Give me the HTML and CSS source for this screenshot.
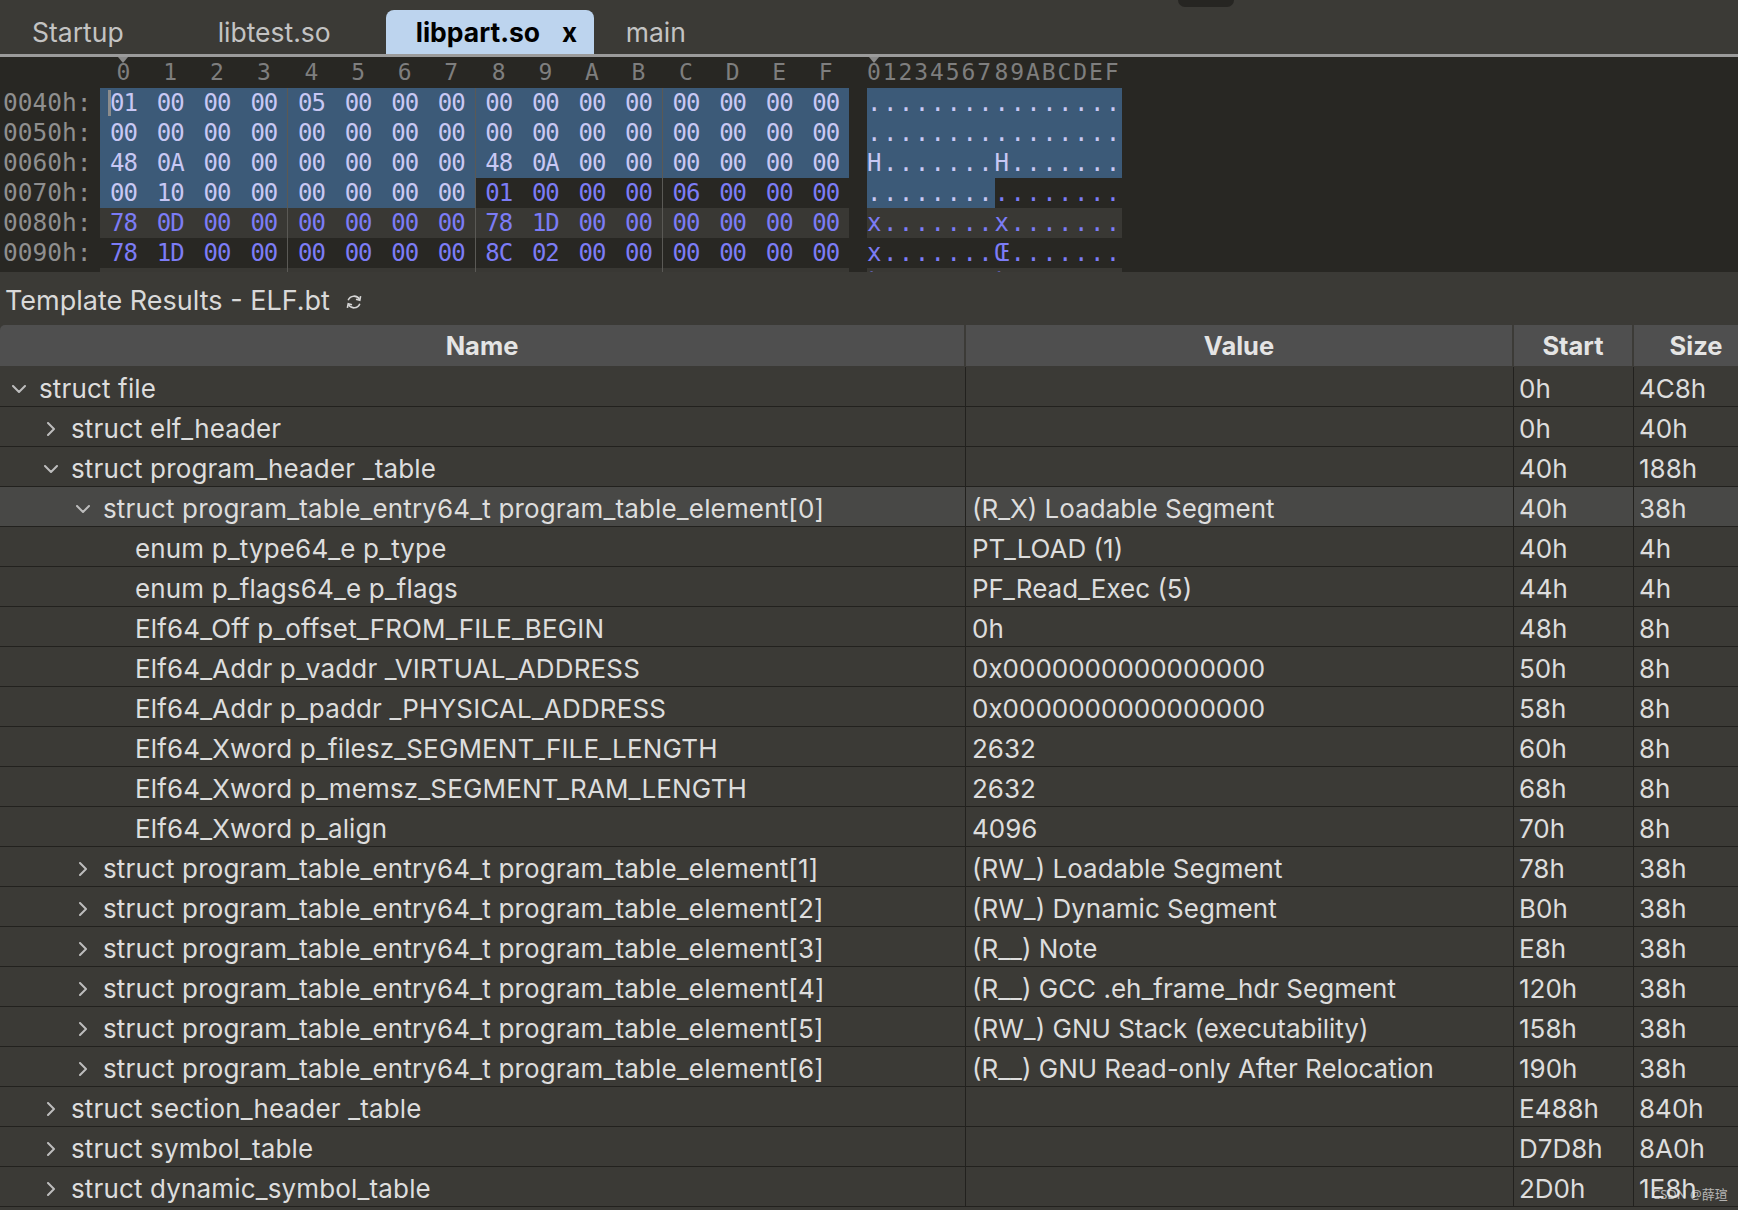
FILE: index.html
```html
<!DOCTYPE html>
<html>
<head>
<meta charset="utf-8">
<link rel="stylesheet" href="styles.css">
</head>
<body>
<div class="app">
  <div class="tabbar">
    <div class="tab tab-startup">Startup</div>
    <div class="tab tab-libtest">libtest.so</div>
    <div class="tab tab-active"><span>libpart.so</span><span class="close">x</span></div>
    <div class="tab tab-main">main</div>
    <div class="notch"></div>
  </div>

  <div class="hexpanel">
    <div class="marker marker-hex"></div>
    <div class="marker marker-ascii"></div>
    <div class="hexrow hexhead">
      <div class="off"></div>
      <div class="bytes">
        <div class="grp"><span>0</span><span>1</span><span>2</span><span>3</span></div>
        <div class="grp"><span>4</span><span>5</span><span>6</span><span>7</span></div>
        <div class="grp"><span>8</span><span>9</span><span>A</span><span>B</span></div>
        <div class="grp"><span>C</span><span>D</span><span>E</span><span>F</span></div>
      </div>
      <div class="gap"></div>
      <div class="ascii"><span class="half">01234567</span><span class="half">89ABCDEF</span></div>
    </div>

    <div class="hexrow">
      <div class="off">0040h:</div>
      <div class="bytes">
        <div class="grp sel"><span class="cursor">01</span><span>00</span><span>00</span><span>00</span></div>
        <div class="grp sel"><span>05</span><span>00</span><span>00</span><span>00</span></div>
        <div class="grp sel"><span>00</span><span>00</span><span>00</span><span>00</span></div>
        <div class="grp sel"><span>00</span><span>00</span><span>00</span><span>00</span></div>
      </div>
      <div class="gap"></div>
      <div class="ascii"><span class="half sel">........</span><span class="half sel">........</span></div>
    </div>

    <div class="hexrow">
      <div class="off">0050h:</div>
      <div class="bytes">
        <div class="grp sel"><span>00</span><span>00</span><span>00</span><span>00</span></div>
        <div class="grp sel"><span>00</span><span>00</span><span>00</span><span>00</span></div>
        <div class="grp sel"><span>00</span><span>00</span><span>00</span><span>00</span></div>
        <div class="grp sel"><span>00</span><span>00</span><span>00</span><span>00</span></div>
      </div>
      <div class="gap"></div>
      <div class="ascii"><span class="half sel">........</span><span class="half sel">........</span></div>
    </div>

    <div class="hexrow alt">
      <div class="off">0060h:</div>
      <div class="bytes">
        <div class="grp sel"><span>48</span><span>0A</span><span>00</span><span>00</span></div>
        <div class="grp sel"><span>00</span><span>00</span><span>00</span><span>00</span></div>
        <div class="grp sel"><span>48</span><span>0A</span><span>00</span><span>00</span></div>
        <div class="grp sel"><span>00</span><span>00</span><span>00</span><span>00</span></div>
      </div>
      <div class="gap"></div>
      <div class="ascii"><span class="half sel">H.......</span><span class="half sel">H.......</span></div>
    </div>

    <div class="hexrow">
      <div class="off">0070h:</div>
      <div class="bytes">
        <div class="grp sel"><span>00</span><span>10</span><span>00</span><span>00</span></div>
        <div class="grp sel"><span>00</span><span>00</span><span>00</span><span>00</span></div>
        <div class="grp"><span>01</span><span>00</span><span>00</span><span>00</span></div>
        <div class="grp"><span>06</span><span>00</span><span>00</span><span>00</span></div>
      </div>
      <div class="gap"></div>
      <div class="ascii"><span class="half sel">........</span><span class="half">........</span></div>
    </div>

    <div class="hexrow alt">
      <div class="off">0080h:</div>
      <div class="bytes">
        <div class="grp"><span>78</span><span>0D</span><span>00</span><span>00</span></div>
        <div class="grp"><span>00</span><span>00</span><span>00</span><span>00</span></div>
        <div class="grp"><span>78</span><span>1D</span><span>00</span><span>00</span></div>
        <div class="grp"><span>00</span><span>00</span><span>00</span><span>00</span></div>
      </div>
      <div class="gap"></div>
      <div class="ascii"><span class="half">x.......</span><span class="half">x.......</span></div>
    </div>

    <div class="hexrow">
      <div class="off">0090h:</div>
      <div class="bytes">
        <div class="grp"><span>78</span><span>1D</span><span>00</span><span>00</span></div>
        <div class="grp"><span>00</span><span>00</span><span>00</span><span>00</span></div>
        <div class="grp"><span>8C</span><span>02</span><span>00</span><span>00</span></div>
        <div class="grp"><span>00</span><span>00</span><span>00</span><span>00</span></div>
      </div>
      <div class="gap"></div>
      <div class="ascii"><span class="half">x.......</span><span class="half">Œ.......</span></div>
    </div>

    <div class="hexrow alt">
      <div class="off">00A0h:</div>
      <div class="bytes">
        <div class="grp"><span>60</span><span>0E</span><span>00</span><span>00</span></div>
        <div class="grp"><span>00</span><span>00</span><span>00</span><span>00</span></div>
        <div class="grp"><span>60</span><span>1E</span><span>00</span><span>00</span></div>
        <div class="grp"><span>00</span><span>00</span><span>00</span><span>00</span></div>
      </div>
      <div class="gap"></div>
      <div class="ascii"><span class="half">`.......</span><span class="half">`.......</span></div>
    </div>
  </div>

  <div class="results-title">
    <span>Template Results - ELF.bt</span>
    <svg class="refresh" width="18" height="16" viewBox="0 0 18 16">
      <path d="M14.5 5.5 A6.2 6.2 0 0 0 3.2 6.2" fill="none" stroke="#d6d6d6" stroke-width="1.6"/>
      <path d="M15.6 2.2 L14.8 6.2 L11 5.2" fill="none" stroke="#d6d6d6" stroke-width="1.6"/>
      <path d="M3.5 10.5 A6.2 6.2 0 0 0 14.8 9.8" fill="none" stroke="#d6d6d6" stroke-width="1.6"/>
      <path d="M2.4 13.8 L3.2 9.8 L7 10.8" fill="none" stroke="#d6d6d6" stroke-width="1.6"/>
    </svg>
  </div>

  <div class="table">
    <div class="thead">
      <div class="th c-name">Name</div>
      <div class="th c-value">Value</div>
      <div class="th c-start">Start</div>
      <div class="th c-size">Size</div>
    </div>

    <div class="tr">
      <div class="td c-name l0"><span class="tog"><svg width="14" height="8" viewBox="0 0 14 8"><polyline points="1,1 7,7 13,1"/></svg></span>struct file</div>
      <div class="td c-value"></div><div class="td c-start">0h</div><div class="td c-size">4C8h</div>
    </div>
    <div class="tr">
      <div class="td c-name l1"><span class="tog"><svg width="8" height="14" viewBox="0 0 8 14"><polyline points="1,1 7,7 1,13"/></svg></span>struct elf_header</div>
      <div class="td c-value"></div><div class="td c-start">0h</div><div class="td c-size">40h</div>
    </div>
    <div class="tr">
      <div class="td c-name l1"><span class="tog"><svg width="14" height="8" viewBox="0 0 14 8"><polyline points="1,1 7,7 13,1"/></svg></span>struct program_header _table</div>
      <div class="td c-value"></div><div class="td c-start">40h</div><div class="td c-size">188h</div>
    </div>
    <div class="tr hl">
      <div class="td c-name l2"><span class="tog"><svg width="14" height="8" viewBox="0 0 14 8"><polyline points="1,1 7,7 13,1"/></svg></span>struct program_table_entry64_t program_table_element[0]</div>
      <div class="td c-value">(R_X) Loadable Segment</div><div class="td c-start">40h</div><div class="td c-size">38h</div>
    </div>
    <div class="tr">
      <div class="td c-name l3"><span class="tog"></span>enum p_type64_e p_type</div>
      <div class="td c-value">PT_LOAD (1)</div><div class="td c-start">40h</div><div class="td c-size">4h</div>
    </div>
    <div class="tr">
      <div class="td c-name l3"><span class="tog"></span>enum p_flags64_e p_flags</div>
      <div class="td c-value">PF_Read_Exec (5)</div><div class="td c-start">44h</div><div class="td c-size">4h</div>
    </div>
    <div class="tr">
      <div class="td c-name l3"><span class="tog"></span>Elf64_Off p_offset_FROM_FILE_BEGIN</div>
      <div class="td c-value">0h</div><div class="td c-start">48h</div><div class="td c-size">8h</div>
    </div>
    <div class="tr">
      <div class="td c-name l3"><span class="tog"></span>Elf64_Addr p_vaddr _VIRTUAL_ADDRESS</div>
      <div class="td c-value">0x0000000000000000</div><div class="td c-start">50h</div><div class="td c-size">8h</div>
    </div>
    <div class="tr">
      <div class="td c-name l3"><span class="tog"></span>Elf64_Addr p_paddr _PHYSICAL_ADDRESS</div>
      <div class="td c-value">0x0000000000000000</div><div class="td c-start">58h</div><div class="td c-size">8h</div>
    </div>
    <div class="tr">
      <div class="td c-name l3"><span class="tog"></span>Elf64_Xword p_filesz_SEGMENT_FILE_LENGTH</div>
      <div class="td c-value">2632</div><div class="td c-start">60h</div><div class="td c-size">8h</div>
    </div>
    <div class="tr">
      <div class="td c-name l3"><span class="tog"></span>Elf64_Xword p_memsz_SEGMENT_RAM_LENGTH</div>
      <div class="td c-value">2632</div><div class="td c-start">68h</div><div class="td c-size">8h</div>
    </div>
    <div class="tr">
      <div class="td c-name l3"><span class="tog"></span>Elf64_Xword p_align</div>
      <div class="td c-value">4096</div><div class="td c-start">70h</div><div class="td c-size">8h</div>
    </div>
    <div class="tr">
      <div class="td c-name l2"><span class="tog"><svg width="8" height="14" viewBox="0 0 8 14"><polyline points="1,1 7,7 1,13"/></svg></span>struct program_table_entry64_t program_table_element[1]</div>
      <div class="td c-value">(RW_) Loadable Segment</div><div class="td c-start">78h</div><div class="td c-size">38h</div>
    </div>
    <div class="tr">
      <div class="td c-name l2"><span class="tog"><svg width="8" height="14" viewBox="0 0 8 14"><polyline points="1,1 7,7 1,13"/></svg></span>struct program_table_entry64_t program_table_element[2]</div>
      <div class="td c-value">(RW_) Dynamic Segment</div><div class="td c-start">B0h</div><div class="td c-size">38h</div>
    </div>
    <div class="tr">
      <div class="td c-name l2"><span class="tog"><svg width="8" height="14" viewBox="0 0 8 14"><polyline points="1,1 7,7 1,13"/></svg></span>struct program_table_entry64_t program_table_element[3]</div>
      <div class="td c-value">(R__) Note</div><div class="td c-start">E8h</div><div class="td c-size">38h</div>
    </div>
    <div class="tr">
      <div class="td c-name l2"><span class="tog"><svg width="8" height="14" viewBox="0 0 8 14"><polyline points="1,1 7,7 1,13"/></svg></span>struct program_table_entry64_t program_table_element[4]</div>
      <div class="td c-value">(R__) GCC .eh_frame_hdr Segment</div><div class="td c-start">120h</div><div class="td c-size">38h</div>
    </div>
    <div class="tr">
      <div class="td c-name l2"><span class="tog"><svg width="8" height="14" viewBox="0 0 8 14"><polyline points="1,1 7,7 1,13"/></svg></span>struct program_table_entry64_t program_table_element[5]</div>
      <div class="td c-value">(RW_) GNU Stack (executability)</div><div class="td c-start">158h</div><div class="td c-size">38h</div>
    </div>
    <div class="tr">
      <div class="td c-name l2"><span class="tog"><svg width="8" height="14" viewBox="0 0 8 14"><polyline points="1,1 7,7 1,13"/></svg></span>struct program_table_entry64_t program_table_element[6]</div>
      <div class="td c-value">(R__) GNU Read-only After Relocation</div><div class="td c-start">190h</div><div class="td c-size">38h</div>
    </div>
    <div class="tr">
      <div class="td c-name l1"><span class="tog"><svg width="8" height="14" viewBox="0 0 8 14"><polyline points="1,1 7,7 1,13"/></svg></span>struct section_header _table</div>
      <div class="td c-value"></div><div class="td c-start">E488h</div><div class="td c-size">840h</div>
    </div>
    <div class="tr">
      <div class="td c-name l1"><span class="tog"><svg width="8" height="14" viewBox="0 0 8 14"><polyline points="1,1 7,7 1,13"/></svg></span>struct symbol_table</div>
      <div class="td c-value"></div><div class="td c-start">D7D8h</div><div class="td c-size">8A0h</div>
    </div>
    <div class="tr">
      <div class="td c-name l1"><span class="tog"><svg width="8" height="14" viewBox="0 0 8 14"><polyline points="1,1 7,7 1,13"/></svg></span>struct dynamic_symbol_table</div>
      <div class="td c-value"></div><div class="td c-start">2D0h</div><div class="td c-size">1E8h</div>
    </div>
  </div>

  <div class="watermark">CSDN @薛瑄</div>
</div>
</body>
</html>
```
FILE: styles.css
```css
* { box-sizing: border-box; }
html, body { margin: 0; padding: 0; }
body {
  width: 1738px;
  height: 1210px;
  overflow: hidden;
  background: #3b3a36;
  font-family: Inter, "Noto Sans", "Noto Sans CJK SC", sans-serif;
  color: #dcdcdc;
}
.app { position: relative; width: 1738px; height: 1210px; overflow: hidden; }

/* Tabs */
.tabbar {
  position: relative;
  height: 57px;
  display: flex;
  align-items: flex-end;
  padding-left: 32px;
  border-bottom: 3px solid #9b9b9b;
  background: #3b3a36;
}
.tab {
  height: 44px;
  display: flex;
  align-items: center;
  font-size: 26.5px;
  color: #c3c3c3;
  white-space: nowrap;
}
.tab-startup { margin-right: 94px; }
.tab-libtest { margin-right: 55px; }
.tab-active {
  width: 208px;
  background: #bdd4ee;
  border-radius: 8px 8px 0 0;
  padding: 0 0 0 30px;
  color: #000;
  font-weight: 700;
  margin-right: 32px;
}
.tab-active .close { margin-left: 22px; font-size: 26px; }
.notch {
  position: absolute;
  left: 1178px; top: 0;
  width: 56px; height: 7px;
  background: #262522;
  border-radius: 0 0 8px 8px;
}

/* Hex panel */
.hexpanel {
  position: relative;
  height: 215px;
  background: #282723;
  overflow: hidden;
  font-family: "DejaVu Sans Mono", monospace;
}
.marker {
  position: absolute;
  top: 0;
  width: 0; height: 0;
  border-left: 5px solid transparent;
  border-right: 5px solid transparent;
  border-top: 6px solid #8a8a8a;
}
.marker-hex { left: 118px; }
.marker-ascii { left: 869px; }
.hexrow {
  display: flex;
  height: 30px;
  line-height: 30px;
}
.hexrow .off {
  width: 100px;
  padding-left: 3px;
  font-size: 24.5px;
  color: #8f8f8f;
}
.bytes { display: flex; width: 749px; }
.grp { display: flex; width: 187.25px; }
.grp + .grp { border-left: 1px solid #5a5955; }
.grp span {
  flex: 1;
  text-align: center;
  font-size: 24px;
  letter-spacing: -1px;
  color: #7c7cf6;
}
.gap { width: 18px; }
.ascii { display: flex; width: 255px; }
.ascii .half {
  width: 127.5px;
  font-size: 24px;
  letter-spacing: 1.45px;
  color: #7c7cf6;
  white-space: pre;
}
.hexrow.alt .bytes, .hexrow.alt .ascii { background: #393834; }
.grp.sel, .half.sel { background: #3c5a78; }
.grp.sel span, .half.sel { color: #c8c8f4; }
.cursor { position: relative; }
.cursor::before {
  content: "";
  position: absolute;
  left: 8px; top: 2px;
  width: 3px; height: 26px;
  background: #8c8c8c;
}
.hexhead { height: 31px; line-height: 31px; }
.hexhead .bytes, .hexhead .ascii { background: transparent; }
.hexhead .grp + .grp { border-left-color: transparent; }
.hexhead .grp span, .hexhead .half { color: #7e7e7e; font-size: 23px; letter-spacing: 0; }
.hexhead .half { letter-spacing: 1.9px; }

/* Results title */
.results-title {
  height: 53px;
  display: flex;
  align-items: center;
  padding-left: 5px;
  padding-top: 4px;
  font-size: 27px;
  color: #d9d9d9;
}
.refresh { margin-left: 15px; margin-top: 3px; }

/* Table */
.table { width: 1760px; }
.thead {
  display: flex;
  height: 41px;
  background: #4f4f4f;
  border-radius: 5px 0 0 0;
  margin-bottom: 1px;
}
.th {
  font-weight: 700;
  font-size: 25.5px;
  color: #e4e4e4;
  text-align: center;
  line-height: 41px;
  border-right: 2px solid #3c3b37;
}
.c-name { width: 966px; }
.c-value { width: 548px; }
.c-start { width: 120px; }
.c-size { width: 126px; }
.tr {
  display: flex;
  height: 40px;
  border-bottom: 1px solid #22211e;
}
.tr.hl { background: #484846; }
.td {
  font-size: 26px;
  line-height: 36px;
  padding-top: 4px;
  color: #dddddd;
  white-space: nowrap;
  overflow: hidden;
  border-right: 1px solid #22211e;
  padding-left: 6px;
}
.td.c-name { display: flex; align-items: center; letter-spacing: 0.15px; }
.td.l0 { padding-left: 6px; }
.td.l1 { padding-left: 38px; }
.td.l2 { padding-left: 70px; }
.td.l3 { padding-left: 102px; }
.tog {
  width: 26px;
  height: 36px;
  margin-right: 7px;
  display: flex;
  align-items: center;
  justify-content: center;
  flex: none;
}
.tog svg polyline {
  fill: none;
  stroke: #bdbdbd;
  stroke-width: 2;
  stroke-linecap: round;
  stroke-linejoin: round;
}
.td.c-start, .td.c-size { padding-left: 5px; }

.watermark {
  position: absolute;
  left: 1652px;
  top: 1184px;
  font-size: 13px;
  color: rgba(235, 235, 235, 0.7);
  font-family: "Noto Sans", "Noto Sans CJK SC", sans-serif;
}
```
